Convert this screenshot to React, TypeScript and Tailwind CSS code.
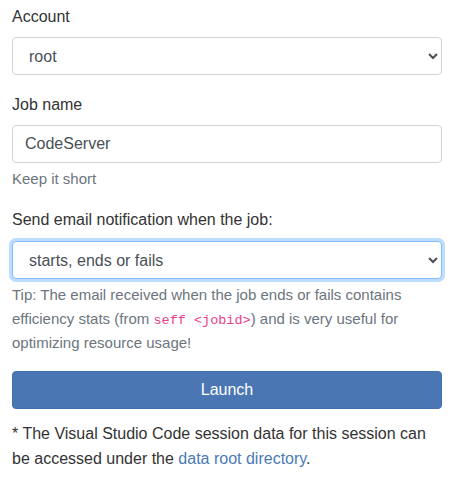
export default function App() {
  return (
    <div className="px-3 pt-[5px] text-[16px] leading-6 text-[#333]" style={{ fontFamily: '"Liberation Sans", Arial, sans-serif' }}>
      <div className="w-[430px]">
        {/* Account */}
        <div className="mb-[18px]">
          <label className="block mb-2">Account</label>
          <select className="block w-full h-[38px] px-3 border border-[#ced4da] rounded-[4px] bg-white text-[#495057]">
            <option>root</option>
          </select>
        </div>

        {/* Job name */}
        <div className="mb-5">
          <label className="block mb-2">Job name</label>
          <input
            type="text"
            defaultValue="CodeServer"
            className="block w-full h-[38px] px-3 border border-[#ced4da] rounded-[4px] bg-white text-[#495057] outline-none"
          />
          <div className="mt-1.5 text-[15px] leading-[19px] text-[#6c757d]">Keep it short</div>
        </div>

        {/* Email notification */}
        <div className="mb-4">
          <label className="block mb-[9px]">Send email notification when the job:</label>
          <select className="block w-full h-[38px] px-3 border border-[#80bdff] rounded-[4px] bg-white text-[#495057] shadow-[0_0_0_3px_rgba(0,123,255,0.25)] outline-none">
            <option>starts, ends or fails</option>
          </select>
          <div className="mt-1 text-[15px] leading-6 text-[#6c757d]">
            Tip: The email received when the job ends or fails contains efficiency stats (from{' '}
            <code className="text-[13.5px] leading-none text-[#e83e8c]" style={{ fontFamily: '"Liberation Mono", "Courier New", monospace' }}>
              seff &lt;jobid&gt;
            </code>
            ) and is very useful for optimizing resource usage!
          </div>
        </div>

        <button className="block w-full h-[38px] rounded-[4px] bg-[#4a77b4] border border-[#4070ae] text-white">
          Launch
        </button>

        <p className="mt-[12px] leading-[25px]">
          * The Visual Studio Code session data for this session can be accessed under the{' '}
          <a href="#" className="text-[#4a7ab6]">data root directory</a>.
        </p>
      </div>
    </div>
  )
}
